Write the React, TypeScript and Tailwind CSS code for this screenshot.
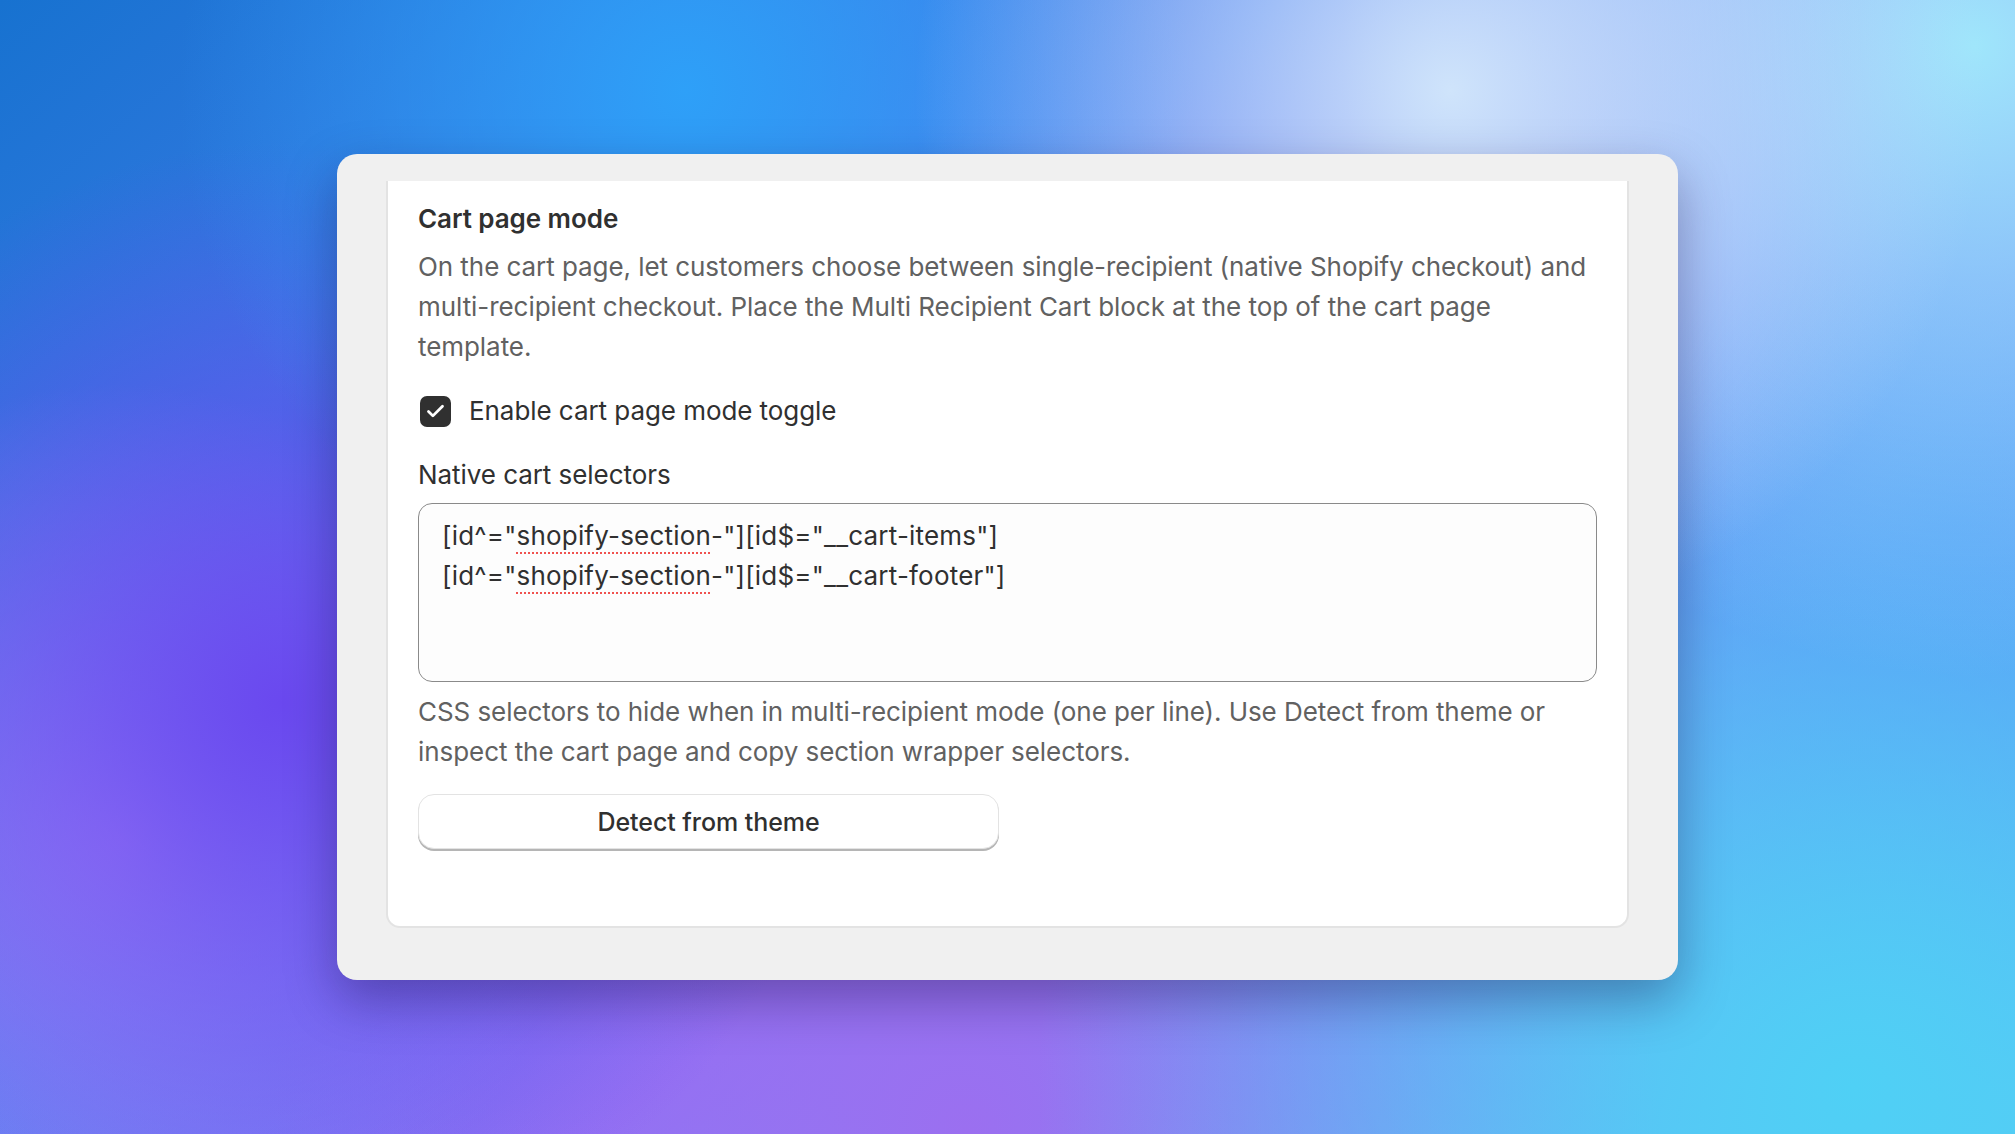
import { Check } from 'lucide-react';

const selectors = [
  { pre: '[id^="', word: 'shopify-section', post: '-"][id$="__cart-items"]' },
  { pre: '[id^="', word: 'shopify-section', post: '-"][id$="__cart-footer"]' },
];

const App = () => {
  return (
    <div className="w-full min-h-screen h-[1134px] flex items-center justify-center font-['Inter',sans-serif] bg-[radial-gradient(circle_at_72%_8%,#cfe4fb_0%,transparent_30%),radial-gradient(circle_at_98%_4%,#9fe6fb_0%,transparent_28%),radial-gradient(circle_at_34%_8%,#2ea0f8_0%,transparent_30%),radial-gradient(circle_at_14%_62%,#6a48ef_0%,transparent_30%),radial-gradient(circle_at_6%_74%,#a48cf8_0%,transparent_22%),radial-gradient(circle_at_92%_96%,#4fd0f5_0%,transparent_38%),radial-gradient(circle_at_48%_100%,#9b6ff0_0%,transparent_45%),radial-gradient(circle_at_97%_46%,#5a8ef8_0%,transparent_28%),linear-gradient(140deg,#1772d0_0%,#4f7ff0_38%,#8c72f5_58%,#5fc4f5_100%)]">
      <div className="w-[1341px] bg-[#f0f0f0] rounded-[20px] pt-[27px] px-[49px] pb-[52px] shadow-[0_20px_50px_rgba(20,10,60,0.35)]">
        <div className="bg-white border-x-2 border-b-2 border-[#e3e3e3] rounded-b-[14px] px-[30px] pt-[18px] pb-[77px] text-[26px] leading-10 tracking-[-0.06px]">
          <h2 className="font-semibold text-[#303030]">Cart page mode</h2>
          <p className="mt-2 text-[#616161]">
            On the cart page, let customers choose between single-recipient (native Shopify checkout) and
            multi-recipient checkout. Place the Multi Recipient Cart block at the top of the cart page
            template.
          </p>

          <label className="mt-6 flex items-center gap-[18px] text-[#303030]">
            <span className="ml-[2px] w-[31px] h-[31px] rounded-[7px] bg-[#303030] flex items-center justify-center">
              <Check className="w-[21px] h-[21px] text-white" strokeWidth={3.2} />
            </span>
            Enable cart page mode toggle
          </label>

          <div className="mt-6 text-[#303030]">Native cart selectors</div>
          <div className="mt-2 h-[179px] border border-[#8a8a8a] rounded-[14px] bg-[#fdfdfd] pl-[23px] pt-[12px] text-[#303030] tracking-[0.2px]">
            {selectors.map((s, i) => (
              <div key={i}>
                {s.pre}
                <span className="underline decoration-dotted decoration-[#f0524f] decoration-2 underline-offset-[7px]">
                  {s.word}
                </span>
                {s.post}
              </div>
            ))}
          </div>

          <p className="mt-[10px] text-[#616161]">
            CSS selectors to hide when in multi-recipient mode (one per line). Use Detect from theme or
            inspect the cart page and copy section wrapper selectors.
          </p>

          <button className="mt-[22px] w-[581px] h-[55px] rounded-[16px] bg-white border border-[#e3e3e3] shadow-[0_2px_0_#b5b5b5] font-medium text-[25px] text-[#303030]">
            Detect from theme
          </button>
        </div>
      </div>
    </div>
  );
};

export default App;
